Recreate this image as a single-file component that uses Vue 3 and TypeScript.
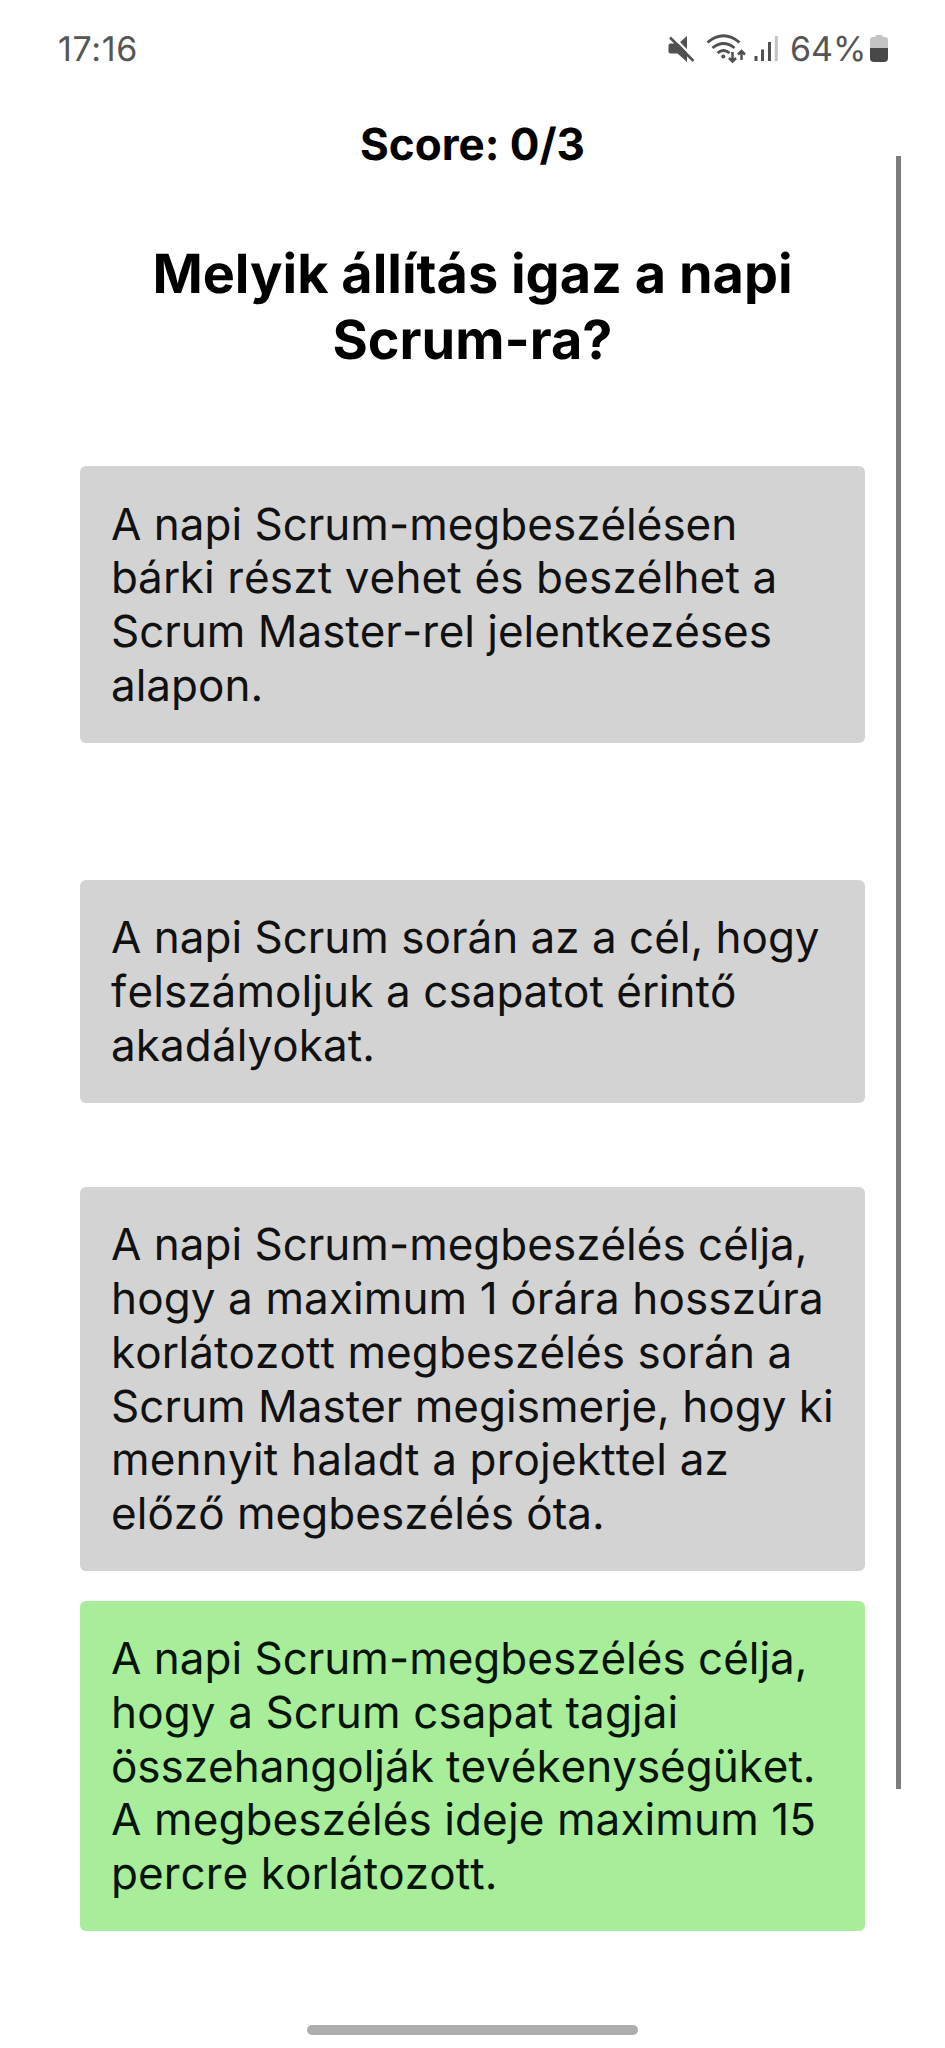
<script setup lang="ts">
interface Line { text: string; tracking: number }
interface Answer { lines: Line[]; kind: string }
const line = (text: string, tracking = 0): Line => ({ text, tracking })
const answers: Answer[] = [
  { kind: 'first', lines: [line('A napi Scrum-megbeszélésen'), line('bárki részt vehet és beszélhet a', 0.15), line('Scrum Master-rel jelentkezéses', -0.02), line('alapon.')] },
  { kind: 'second', lines: [line('A napi Scrum során az a cél, hogy'), line('felszámoljuk a csapatot érintő', 0.1), line('akadályokat.', 0.1)] },
  { kind: 'third', lines: [line('A napi Scrum-megbeszélés célja,'), line('hogy a maximum 1 órára hosszúra', 0.12), line('korlátozott megbeszélés során a', 0.11), line('Scrum Master megismerje, hogy ki', 0.02), line('mennyit haladt a projekttel az', 0.2), line('előző megbeszélés óta.', 0.04)] },
  { kind: 'correct', lines: [line('A napi Scrum-megbeszélés célja,'), line('hogy a Scrum csapat tagjai', 0.13), line('összehangolják tevékenységüket.', -0.02), line('A megbeszélés ideje maximum 15', 0.12), line('percre korlátozott.', 0.12)] },
]
</script>

<template>
  <div class="screen">
    <header class="status">
      <span class="time">17:16</span>
      <svg class="icons" viewBox="662 30 120 38" width="120" height="38" fill="none" stroke="#505050">
        <path d="M669.500 43.500h8l8.500-7.500v26l-9.500-8.500h-7q-2 0-2-2v-6q0-2 2-2z" stroke="none" fill="#505050" />
        <path d="M671.500 36l22 22.500" stroke="#fff" stroke-width="2.500" />
        <path d="M669 37.500l23.500 23.500" stroke-width="2.500" />
        <g stroke-width="2.900">
          <path d="M706.500 42.500q16-13.500 32 0" />
          <path d="M711.500 48q11-9 22 0" />
          <path d="M716.500 53q6-5 12 0" />
          <path d="M731.500 52v9M728 58l3.500 3.500 3.500-3.500M740.500 60V51M737 54.500l3.500-3.500 3.500 3.500" stroke-width="2.500" />
        </g>
        <circle cx="722.300" cy="56.500" r="2" fill="#505050" stroke="none" />
        <g stroke-width="3">
          <path d="M755 61v-5M761.500 61v-11.500M768.500 61v-19" />
          <path d="M775.300 61V36" stroke="#c4c4c4" />
        </g>
      </svg>
      <span class="pct">64%</span>
      <svg class="battery" viewBox="0 0 18 28" width="18" height="28">
        <path d="M5 2q0-2 2-2h4q2 0 2 2h2q3 0 3 3v9H0V5q0-3 3-3z" fill="#c4c4c4" />
        <path d="M0 13h18v10q0 4-4 4H4q-4 0-4-4z" fill="#484848" />
      </svg>
    </header>
    <main>
      <p class="score">Score: 0/3</p>
      <h1>Melyik állítás igaz a napi<br>Scrum-ra?</h1>
      <section class="answers">
        <button v-for="a in answers" :key="a.kind" :class="['answer', a.kind]">
          <span v-for="l in a.lines" :key="l.text" :style="{ letterSpacing: l.tracking + 'px' }">{{ l.text }}</span>
        </button>
      </section>
    </main>
    <i class="scrollbar" />
    <i class="handle" />
  </div>
</template>

<style>
body { margin: 0; background: #fff; }
</style>
<style scoped>
.screen { position: relative; width: 945px; height: 2048px; overflow: hidden; background: #fff; font-family: Inter, sans-serif; color: #000; text-rendering: geometricPrecision; }
.status { display: flex; align-items: center; height: 98px; box-sizing: border-box; padding: 0 57px 0 58px; font: 34px Inter, sans-serif; color: #555; }
.time { flex: 1; letter-spacing: 0.7px; }
.icons { margin-right: 7px; }
.pct { width: 80px; white-space: nowrap; }
.score { margin: 21px 0 0; text-align: center; font-weight: 700; font-size: 44px; line-height: 50px; }
h1 { margin: 73px 0 0; text-align: center; font-size: 54px; line-height: 66px; font-weight: 700; }
.answers { display: flex; flex-direction: column; margin: 92px 80px 0; }
.answer { display: flex; flex-direction: column; align-items: flex-start; border: 0; border-radius: 6px; padding: 31.500px 31px 30.500px; background: #d3d3d3; font: 44px/53.7px Inter, sans-serif; color: #111; white-space: nowrap; font-kerning: none; text-rendering: geometricPrecision; }
.first { margin-bottom: 137px; }
.second { margin-bottom: 84px; }
.third { margin-bottom: 30px; }
.correct { background: #a7ed9a; color: #081408; padding: 31px 31px 30px; }
.scrollbar { position: absolute; left: 896px; top: 156px; width: 5px; height: 1633px; background: #7c7c7c; }
.handle { position: absolute; left: 307px; top: 2025px; width: 331px; height: 10px; border-radius: 5px; background: #aeaeae; }
</style>
